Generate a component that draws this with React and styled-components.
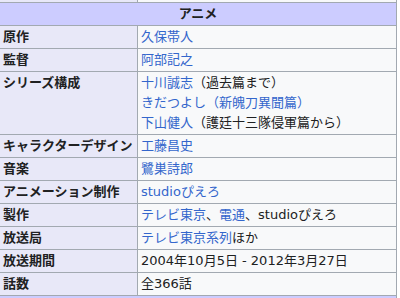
import React from "react";
import styled, { createGlobalStyle } from "styled-components";

const GlobalStyle = createGlobalStyle`
  html, body {
    margin: 0;
    padding: 0;
    background: #ffffff;
  }
  body {
    font-family: "DejaVu Sans", "Noto Sans CJK JP", sans-serif;
    font-size: 13px;
    color: #202122;
    overflow: hidden;
  }
`;

const Infobox = styled.table`
  border-collapse: collapse;
  width: 398px;
  margin: -21px 0 0 -1px;
  table-layout: fixed;
  font-size: 13px;
  line-height: 20px;
`;

const Row = styled.tr``;

const Header = styled.th`
  background: #ccccff;
  border: 1px solid #a2a9b1;
  font-weight: bold;
  text-align: center;
  padding: 1px 3px;
  height: 20px;
`;

const Label = styled.th`
  width: 131px;
  background: #e8e8f8;
  border: 1px solid #a2a9b1;
  font-weight: bold;
  text-align: left;
  vertical-align: top;
  white-space: nowrap;
  padding: 1px 3px;
  height: 20px;
`;

const Value = styled.td`
  background: #f8f9fa;
  border: 1px solid #a2a9b1;
  vertical-align: top;
  padding: 1px 3px;
  white-space: nowrap;
`;

const A = styled.a`
  color: #3366cc;
  text-decoration: none;
`;

const Line = styled.div``;

export default function App() {
  return (
    <>
      <GlobalStyle />
      <Infobox>
        <tbody>
          <Row>
            <Label />
            <Value />
          </Row>
          <Row>
            <Header colSpan={2}>アニメ</Header>
          </Row>
          <Row>
            <Label>原作</Label>
            <Value>
              <A href="#">久保帯人</A>
            </Value>
          </Row>
          <Row>
            <Label>監督</Label>
            <Value>
              <A href="#">阿部記之</A>
            </Value>
          </Row>
          <Row>
            <Label>シリーズ構成</Label>
            <Value>
              <Line>
                <A href="#">十川誠志</A>（過去篇まで）
              </Line>
              <Line>
                <A href="#">きだつよし</A>
                <A href="#">（新魄刀異聞篇）</A>
              </Line>
              <Line>
                <A href="#">下山健人</A>（護廷十三隊侵軍篇から）
              </Line>
            </Value>
          </Row>
          <Row>
            <Label>キャラクターデザイン</Label>
            <Value>
              <A href="#">工藤昌史</A>
            </Value>
          </Row>
          <Row>
            <Label>音楽</Label>
            <Value>
              <A href="#">鷺巣詩郎</A>
            </Value>
          </Row>
          <Row>
            <Label>アニメーション制作</Label>
            <Value>
              <A href="#">studioぴえろ</A>
            </Value>
          </Row>
          <Row>
            <Label>製作</Label>
            <Value>
              <A href="#">テレビ東京</A>、<A href="#">電通</A>、studioぴえろ
            </Value>
          </Row>
          <Row>
            <Label>放送局</Label>
            <Value>
              <A href="#">テレビ東京系列</A>ほか
            </Value>
          </Row>
          <Row>
            <Label>放送期間</Label>
            <Value>2004年10月5日 - 2012年3月27日</Value>
          </Row>
          <Row>
            <Label>話数</Label>
            <Value>全366話</Value>
          </Row>
          <Row>
            <Header colSpan={2}>&nbsp;</Header>
          </Row>
        </tbody>
      </Infobox>
    </>
  );
}
